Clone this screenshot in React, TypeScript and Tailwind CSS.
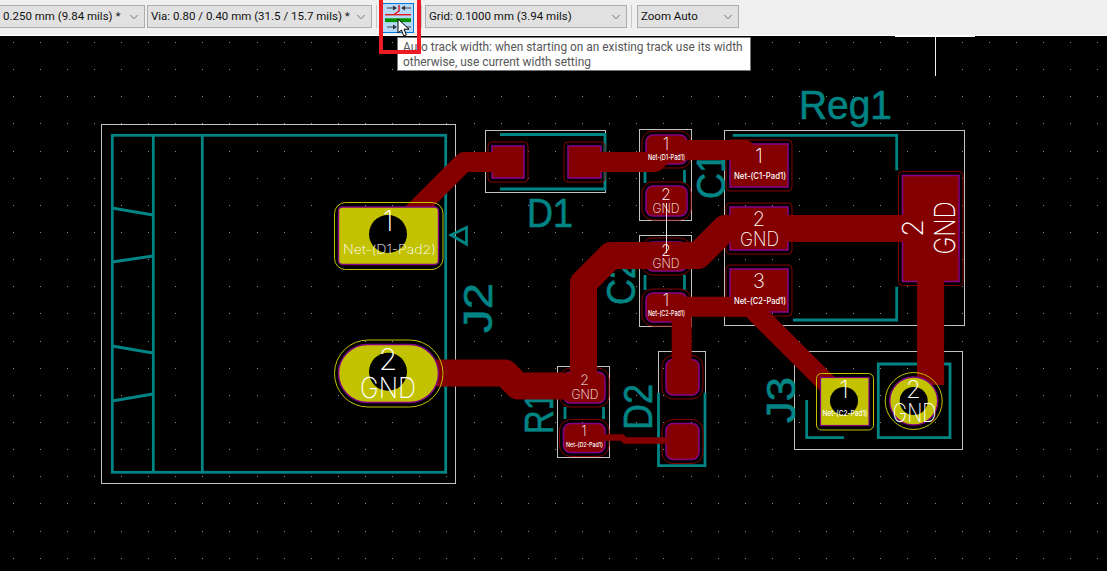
import { ChevronDown } from "lucide-react";

const TEAL = "#008484";
const TRACK = "#840000";
const PURPLE = "#840084";
const GOLD = "#c2c200";
const SILVER = "#c2c2c2";

const gridX = Array.from({ length: 41 }, (_, i) => Math.round(12.5 + 27.12 * i));
const gridY = Array.from({ length: 20 }, (_, i) => Math.round(42 + 27.14 * i));

function Select({ label, className }: { label: string; className: string }) {
  return (
    <div className={`flex h-[23px] items-center justify-between border border-[#adadad] bg-[#e1e1e1] pl-[3px] pr-[3px] font-['Roboto',sans-serif] text-[11.5px] text-[#111] ${className}`}>
      <span className="whitespace-nowrap">{label}</span>
      <ChevronDown size={14} strokeWidth={1.2} className="text-[#444]" />
    </div>
  );
}

function Sep({ className }: { className: string }) {
  return <div className={`mx-[2px] h-[23px] w-px bg-[#c8c8c8] ${className}`} />;
}

function TrackIcon() {
  return (
    <svg width="30" height="28" viewBox="384 3 30 28">
      <path d="M388 7h6M406 7h6M388 26h6M406 26h6" stroke="#444" strokeWidth="1" />
      <path d="M394 4.5L398 7L394 9.5zM406 4.5L402 7L406 9.5zM394 23.5L398 26L394 28.5zM406 23.5L402 26L406 28.5z" fill="#333" />
      <path d="M400 4v6l-5 3.5" stroke="#e01b24" strokeWidth="1.5" fill="none" />
      <path d="M386 13.7h26" stroke="#e01b24" strokeWidth="1.4" />
      <path d="M386 19.2h26" stroke="#009000" strokeWidth="3.8" />
    </svg>
  );
}

function Cursor() {
  return (
    <svg width="14" height="20" viewBox="0 0 14 20" className="absolute left-[397px] top-[18px]">
      <path d="M1 1v14l3.4-3 2.4 6 2.6-1-2.4-5.8h5z" fill="#fff" stroke="#000" strokeWidth="1" />
    </svg>
  );
}

function Pad({ x, y, w, h, r = 4, pad = 4 }: { x: number; y: number; w: number; h: number; r?: number; pad?: number }) {
  return (
    <g fill="none">
      <rect x={x - pad} y={y - pad} width={w + pad * 2} height={h + pad * 2} rx={r + pad} stroke={TRACK} strokeWidth="1" />
      <rect x={x} y={y} width={w} height={h} rx={r} fill={TRACK} stroke={PURPLE} strokeWidth="1.6" />
    </g>
  );
}

function Silk({ d }: { d: string }) {
  return <path d={d} fill="none" stroke={TEAL} strokeWidth="2.8" />;
}

function Ref({ x, y, children, len, rotate }: { x: number; y: number; children: string; len: number; rotate?: boolean }) {
  return (
    <text
      x={x}
      y={y}
      fill={TEAL}
      stroke={TEAL}
      strokeWidth="0.6"
      fontSize="40"
      fontFamily="Liberation Sans, sans-serif"
      textLength={len}
      lengthAdjust="spacingAndGlyphs"
      transform={rotate ? `rotate(-90 ${x} ${y})` : undefined}
    >
      {children}
    </text>
  );
}

// pad labels: thin white text centred on cx
function Label({ cx, y, size, len, children, bold }: { cx: number; y: number; size: number; len?: number; children: string; bold?: boolean }) {
  return (
    <text
      x={cx}
      y={y}
      fill="#fff"
      fontSize={size}
      fontWeight={bold ? 500 : 200}
      fontFamily="Inter, sans-serif"
      textAnchor="middle"
      textLength={len}
      lengthAdjust="spacingAndGlyphs"
    >
      {children}
    </text>
  );
}

function Board() {
  return (
    <svg width="1107" height="535" viewBox="0 36 1107 535" className="block">
      <rect x="0" y="36" width="1107" height="535" fill="#000" />
      {gridY.map((y) =>
        gridX.map((x) => <rect key={`${x}-${y}`} x={x} y={y} width="1" height="1" fill="#8c8c8c" />)
      )}

      {/* stray redraw lines near the top */}
      <path d="M895 36.5h80" stroke="#fff" strokeWidth="1" />
      <path d="M935.5 37v39" stroke="#f0f0f0" strokeWidth="1" />

      {/* courtyards */}
      <g fill="none" stroke={SILVER} strokeWidth="1">
        <rect x="101.5" y="124.5" width="354" height="359" />
        <rect x="485.5" y="130.5" width="120" height="62" />
        <rect x="639.5" y="129.5" width="52" height="91" />
        <rect x="639.5" y="235.5" width="52" height="91" />
        <rect x="724.5" y="130.5" width="240" height="195" />
        <rect x="557.5" y="366.5" width="52" height="91" />
        <rect x="658.5" y="351.5" width="47" height="114" />
        <rect x="794.5" y="351.5" width="168" height="98" />
      </g>

      {/* silkscreen */}
      <rect x="112.3" y="135.3" width="333.4" height="337" fill="none" stroke={TEAL} strokeWidth="2.8" />
      <Silk d="M153.3 135v337M202.3 135v337M112 208l41 7M112 262l41-6M112 346l41 7M112 401l41-7" />
      <path d="M451 235l15.5-7.5v16.5z" fill="none" stroke={TEAL} strokeWidth="2.8" />
      <Silk d="M500 134.5h105v54.5h-105" />
      <Silk d="M645 170v13M684.5 170v13M645 275v15M684.5 275v15M565 407v12M603.5 407v12" />
      <Silk d="M732.7 135.3h164v35M793 320h103.7v-33.3" />
      <Silk d="M658.5 392.7v73h46.5v-73" />
      <Silk d="M806.7 400v37.7h37.3M878.3 364h71.7v73.7h-71.7z" />

      <Ref x={527} y={227} len={46}>D1</Ref>
      <Ref x={799} y={119} len={93}>Reg1</Ref>
      <Ref x={492} y={333} len={50} rotate>J2</Ref>
      <Ref x={725} y={199} len={46} rotate>C1</Ref>
      <Ref x={635} y={305} len={46} rotate>C2</Ref>
      <Ref x={553} y={434} len={42} rotate>R1</Ref>
      <Ref x={651.7} y={430} len={46} rotate>D2</Ref>
      <Ref x={795} y={423} len={46} rotate>J3</Ref>

      {/* smd pads */}
      <Pad x={492} y={146} w={32} h={32} r={0} />
      <Pad x={568} y={146} w={33} h={32} r={0} />
      <Pad x={646} y={135} w={41} h={29} r={7} />
      <Pad x={646} y={186} w={41} h={30} r={7} />
      <Pad x={646} y={242} w={41} h={29} r={7} />
      <Pad x={646} y={293} w={41} h={29} r={7} />
      <Pad x={730} y={144} w={58} h={43} r={0} />
      <Pad x={730} y={207} w={58} h={43} r={0} />
      <Pad x={730} y={269} w={58} h={43} r={0} />
      <Pad x={902.5} y={175.5} w={56.5} h={106} r={0} />
      <Pad x={563.5} y={372} w={41.5} h={31} r={7} />
      <Pad x={563.5} y={423.5} w={41.5} h={29} r={7} />
      <Pad x={666} y={359.5} w={33} h={35.5} r={7} />
      <Pad x={666} y={423.5} w={33} h={36} r={7} />

      {/* tracks */}
      <g fill="none" stroke={TRACK} strokeLinecap="round" strokeLinejoin="round">
        <path d="M412 214L464 162H508M585 162H655L667 150H745" strokeWidth="20" />
        <path d="M666 306.7H750L845 401.5M668 306L681.7 318V380" strokeWidth="20" />
        <path d="M430 373H505L518 386H590" strokeWidth="27" strokeLinecap="butt" />
        <path d="M590 386h0" strokeWidth="27" />
        <path d="M583.5 386V283L611 255.5H698L725 228.5H905M930.6 228.5V385" strokeWidth="27" strokeLinecap="butt" />
        <path d="M585 437.5H622L625 440.5H682" strokeWidth="6.5" />
      </g>

      {/* through hole pads */}
      <rect x="334.5" y="202.5" width="108.5" height="67" rx="11" fill="none" stroke={GOLD} strokeWidth="1" />
      <rect x="338.5" y="207" width="100" height="57.5" rx="4" fill={GOLD} stroke={PURPLE} strokeWidth="1.4" />
      <circle cx="388" cy="234" r="19" fill="#000" />
      <rect x="334.5" y="340" width="108.5" height="67" rx="33.5" fill="none" stroke={GOLD} strokeWidth="1" />
      <rect x="338.5" y="344.5" width="100" height="58" rx="29" fill={GOLD} stroke={PURPLE} strokeWidth="1.4" />
      <circle cx="388" cy="371.7" r="19" fill="#000" />
      <rect x="816.5" y="373.5" width="57" height="56.5" rx="5" fill="none" stroke={GOLD} strokeWidth="1" />
      <rect x="820.5" y="377.5" width="48.5" height="48" fill={GOLD} stroke={PURPLE} strokeWidth="1.2" />
      <circle cx="844" cy="401" r="14" fill="#000" />
      <circle cx="913.7" cy="401" r="28.5" fill="none" stroke={GOLD} strokeWidth="1" />
      <circle cx="913.7" cy="401" r="24" fill={GOLD} stroke={PURPLE} strokeWidth="1.4" />
      <circle cx="913.7" cy="401" r="14" fill="#000" />

      {/* ratsnest */}
      <path d="M666.5 203V253" stroke="#e8e8e8" strokeWidth="1" />

      {/* pad labels */}
      <Label cx={388} y={231} size={28}>1</Label>
      <Label cx={389.5} y={254} size={12.5} len={93}>Net-(D1-Pad2)</Label>
      <Label cx={388} y={370} size={30}>2</Label>
      <Label cx={388} y={398} size={29} len={56}>GND</Label>
      <Label cx={666} y={150} size={17}>1</Label>
      <Label cx={666.5} y={159.5} size={7.5} len={37} bold>Net-(D1-Pad1)</Label>
      <Label cx={666} y={200} size={16}>2</Label>
      <Label cx={666} y={213} size={13.5} len={27}>GND</Label>
      <Label cx={666} y={256} size={16}>2</Label>
      <Label cx={666} y={268} size={13.5} len={27}>GND</Label>
      <Label cx={666} y={306} size={17}>1</Label>
      <Label cx={666.5} y={316} size={7.5} len={37} bold>Net-(C2-Pad1)</Label>
      <Label cx={759} y={163} size={20}>1</Label>
      <Label cx={760} y={179} size={9} len={52} bold>Net-(C1-Pad1)</Label>
      <Label cx={759} y={226} size={20}>2</Label>
      <Label cx={759.5} y={246} size={19.5} len={39}>GND</Label>
      <Label cx={759} y={288} size={20}>3</Label>
      <Label cx={760} y={304} size={9} len={52} bold>Net-(C2-Pad1)</Label>
      <g transform="rotate(-90 916 228)">
        <Label cx={916} y={235} size={29}>2</Label>
      </g>
      <g transform="rotate(-90 944 228)">
        <Label cx={944} y={239} size={29} len={53}>GND</Label>
      </g>
      <Label cx={584.5} y={385} size={14}>2</Label>
      <Label cx={585} y={399} size={13.5} len={27}>GND</Label>
      <Label cx={584} y={436} size={14}>1</Label>
      <Label cx={584.5} y={447} size={6.5} len={37} bold>Net-(D2-Pad1)</Label>
      <Label cx={844} y={398} size={24}>1</Label>
      <Label cx={845} y={416} size={8} len={45} bold>Net-(C2-Pad1)</Label>
      <Label cx={913.5} y={398} size={24}>2</Label>
      <Label cx={914.5} y={422} size={26} len={44}>GND</Label>
    </svg>
  );
}

export default function App() {
  return (
    <div className="relative h-[571px] w-[1107px] overflow-hidden bg-black">
      <div className="flex h-[36px] items-start border-b border-white bg-[#f0f0f0] pt-[5px]">
        <Select label="0.250 mm (9.84 mils) *" className="-ml-[1px] w-[146px]" />
        <Select label="Via: 0.80 / 0.40 mm (31.5 / 15.7 mils) *" className="ml-[2px] w-[225px]" />
        <Sep className="ml-[4px]" />
        <div className="-mt-[2px] ml-[3px] flex h-[30px] w-[32px] items-center justify-center border border-[#0078d7] bg-[#b5d9f6]">
          <TrackIcon />
        </div>
        <Sep className="ml-[7px]" />
        <Select label="Grid: 0.1000 mm (3.94 mils)" className="ml-[1px] w-[202px]" />
        <Sep className="ml-[4px]" />
        <Select label="Zoom Auto" className="ml-[3px] w-[102px]" />
      </div>

      <Board />

      <div className="absolute left-[397px] top-[37px] h-[34px] w-[354px] border border-[#767676] bg-white px-[5px] py-[2px] font-['Roboto',sans-serif] text-[11.9px] leading-[15px] text-[#575757]">
        <div className="whitespace-nowrap">Auto track width: when starting on an existing track use its width</div>
        <div className="whitespace-nowrap">otherwise, use current width setting</div>
      </div>
      <div className="absolute left-[379px] top-0 h-[54px] w-[42px] border-[4px] border-t-0 border-[#ed1c24]" />
      <Cursor />
    </div>
  );
}
